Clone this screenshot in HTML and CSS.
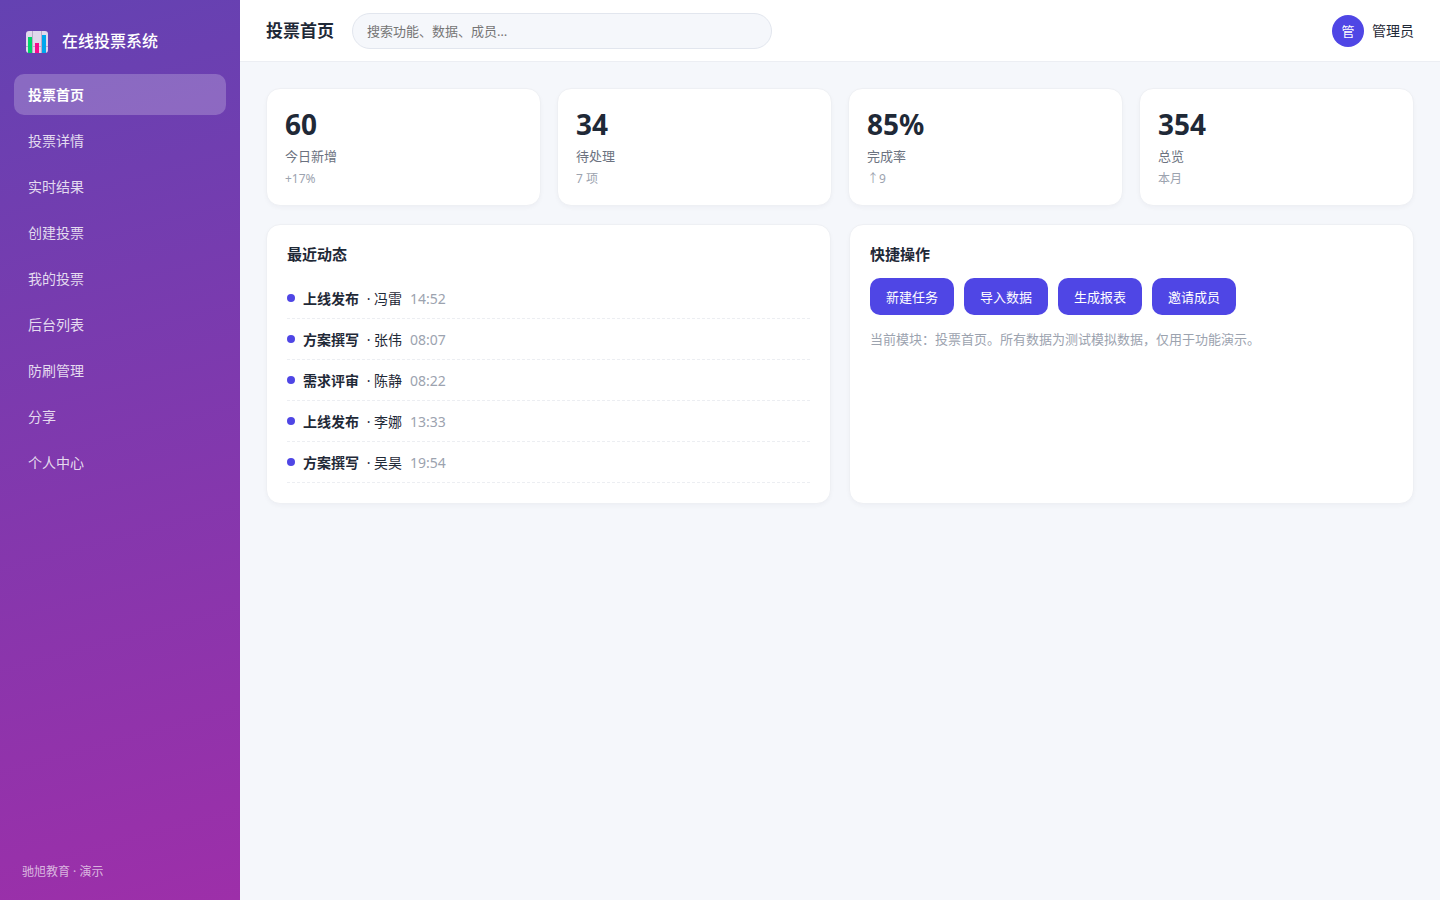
FILE: index.html
```html
<!DOCTYPE html>
<html lang="zh-CN">
<head>
<meta charset="utf-8">
<title>在线投票系统</title>
<link rel="stylesheet" href="styles.css">
</head>
<body>
<div class="app">
  <aside class="sidebar">
    <div class="brand">
      <svg class="logo" viewBox="0 0 22 22" aria-hidden="true">
        <rect width="22" height="22" rx="3" fill="#e1d8ec"/>
        <path d="M6.500 0v22M15.500 0v22M0 15.500h22" stroke="#b9aac8" fill="none"/>
        <rect x="2" y="6" width="4" height="16" fill="#00d26a"/>
        <rect x="9" y="12" width="4" height="10" fill="#f70a8d"/>
        <rect x="16" y="4" width="4" height="18" fill="#00a6ed"/>
      </svg>
      <span>在线投票系统</span>
    </div>
    <nav class="nav">
      <a class="nav-item active" href="#">投票首页</a>
      <a class="nav-item" href="#">投票详情</a>
      <a class="nav-item" href="#">实时结果</a>
      <a class="nav-item" href="#">创建投票</a>
      <a class="nav-item" href="#">我的投票</a>
      <a class="nav-item" href="#">后台列表</a>
      <a class="nav-item" href="#">防刷管理</a>
      <a class="nav-item" href="#">分享</a>
      <a class="nav-item" href="#">个人中心</a>
    </nav>
    <div class="side-foot">驰旭教育 · 演示</div>
  </aside>
  <div class="main">
    <header class="topbar">
      <h1 class="page-title">投票首页</h1>
      <input class="search" type="search" aria-label="搜索" placeholder="搜索功能、数据、成员…">
      <div class="user"><span class="avatar">管</span><span>管理员</span></div>
    </header>
    <main class="content">
      <section class="stats">
        <div class="card stat"><div class="num">60</div><div class="label">今日新增</div><div class="sub">+17%</div></div>
        <div class="card stat"><div class="num">34</div><div class="label">待处理</div><div class="sub">7 项</div></div>
        <div class="card stat"><div class="num">85%</div><div class="label">完成率</div><div class="sub">↑9</div></div>
        <div class="card stat"><div class="num">354</div><div class="label">总览</div><div class="sub">本月</div></div>
      </section>
      <section class="panels">
        <div class="card panel">
          <h2 class="panel-title">最近动态</h2>
          <ul class="feed">
            <li><i class="dot"></i><span><b>上线发布</b> · 冯雷</span><time>14:52</time></li>
            <li><i class="dot"></i><span><b>方案撰写</b> · 张伟</span><time>08:07</time></li>
            <li><i class="dot"></i><span><b>需求评审</b> · 陈静</span><time>08:22</time></li>
            <li><i class="dot"></i><span><b>上线发布</b> · 李娜</span><time>13:33</time></li>
            <li><i class="dot"></i><span><b>方案撰写</b> · 吴昊</span><time>19:54</time></li>
          </ul>
        </div>
        <div class="card panel">
          <h2 class="panel-title">快捷操作</h2>
          <div class="actions">
            <button class="btn" type="button">新建任务</button>
            <button class="btn" type="button">导入数据</button>
            <button class="btn" type="button">生成报表</button>
            <button class="btn" type="button">邀请成员</button>
          </div>
          <p class="note">当前模块：投票首页。所有数据为测试模拟数据，仅用于功能演示。</p>
        </div>
      </section>
    </main>
  </div>
</div>
</body>
</html>
```
FILE: styles.css
```css
* { box-sizing: border-box; margin: 0; padding: 0; }
body {
  font-family: "Noto Sans", "Noto Sans CJK SC", sans-serif;
  font-size: 14px;
  line-height: 20px;
  color: #1f2937;
  background: #f5f7fb;
}
.app { display: flex; min-height: 100vh; }
.sidebar {
  flex: 0 0 240px;
  display: flex;
  flex-direction: column;
  padding: 20px 14px 19px;
  background: linear-gradient(165deg, #6442b2, #9d2fa9);
  color: #fff;
}
.brand {
  display: flex;
  align-items: center;
  gap: 14px;
  padding: 8px 12px 20px;
  font-size: 16px;
  line-height: 26px;
  font-weight: 500;
}
.logo { width: 22px; height: 22px; margin-top: 2px; }
.nav { display: flex; flex-direction: column; gap: 5px; }
.nav-item {
  padding: 11px 14px;
  border-radius: 10px;
  line-height: 19px;
  color: rgba(255, 255, 255, .82);
  text-decoration: none;
}
.nav-item.active { background: rgba(255, 255, 255, .22); color: #fff; font-weight: 600; }
.side-foot { margin-top: auto; padding: 0 8px; font-size: 12px; line-height: 18px; color: rgba(255, 255, 255, .65); }
.main { flex: 1; min-width: 0; }
.topbar {
  display: flex;
  align-items: center;
  gap: 18px;
  height: 62px;
  padding: 0 26px;
  background: #fff;
  border-bottom: 1px solid #eceef3;
}
.page-title { font-size: 17px; line-height: 25px; font-weight: 700; }
.search {
  flex: 0 1 420px;
  height: 36px;
  padding: 0 14px;
  border: 1px solid #e2e6ee;
  border-radius: 18px;
  background: #f5f7fb;
  font: inherit;
  font-size: 13px;
  appearance: none;
  outline: none;
}
.search::placeholder { color: #757575; }
.user { display: flex; align-items: center; gap: 8px; margin-left: auto; }
.avatar {
  display: grid;
  place-items: center;
  width: 32px;
  height: 32px;
  border-radius: 50%;
  background: #4f46e5;
  color: #fff;
  font-size: 13px;
}
.content { padding: 26px; }
.card {
  background: #fff;
  border: 1px solid #eef0f4;
  border-radius: 14px;
  box-shadow: 0 2px 4px rgba(20, 30, 60, .03);
}
.stats { display: grid; grid-template-columns: repeat(4, 1fr); gap: 16px; margin-bottom: 18px; }
.stat { padding: 18px; }
.num { font-size: 28px; line-height: 34px; font-weight: 700; }
.label { margin-top: 5px; font-size: 13px; color: #6b7280; }
.sub { margin-top: 5px; font-size: 12px; line-height: 16px; color: #9ca3af; }
.panels { display: grid; grid-template-columns: 1fr 1fr; gap: 18px; }
.panel { padding: 20px; }
.panel-title { margin-bottom: 15px; font-size: 15px; line-height: 18px; font-weight: 600; }
.feed { list-style: none; }
.feed li {
  display: flex;
  gap: 8px;
  padding: 10px 0 8px;
  line-height: 22px;
  border-bottom: 1px dashed #eceef2;
}
.feed b { margin-right: 4px; }
.dot { width: 8px; height: 8px; margin-top: 6px; border-radius: 50%; background: #4f46e5; }
.feed time { color: #9ca3af; }
.actions { display: flex; flex-wrap: wrap; gap: 10px; }
.btn {
  padding: 0 16px;
  height: 37px;
  border: 0;
  border-radius: 10px;
  background: #4f46e5;
  color: #fff;
  font: inherit;
  font-size: 13px;
}
.note { margin-top: 14px; font-size: 13px; color: #9ca3af; }
```
